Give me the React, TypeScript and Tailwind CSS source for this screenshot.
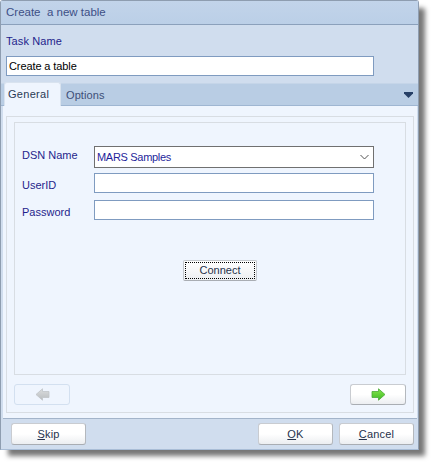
import React from "react";

function Btn({ children, className = "" }: { children?: React.ReactNode; className?: string }) {
  return (
    <div className={"h-[22px] rounded-[3px] border border-[#c9ccd1] border-b-[#a9adb3] border-r-[#b4b8bd] bg-gradient-to-b from-white via-white to-[#eceef1] flex items-center justify-center text-[11px] text-[#26324c] tracking-[0.2px] " + className}>
      {children}
    </div>
  );
}

function Arrow({ id, dir, top, bottom, stroke }: { id: string; dir: "l" | "r"; top: string; bottom: string; stroke: string }) {
  return (
    <svg width="15" height="13" viewBox="0 0 15 13" className={dir === "l" ? "-scale-x-100" : ""}>
      <defs>
        <linearGradient id={id} x1="0" y1="0" x2="0" y2="1">
          <stop offset="0" stopColor={top} />
          <stop offset="1" stopColor={bottom} />
        </linearGradient>
      </defs>
      <path d="M1 3.500h6.500V.8l6.500 5.700-6.500 5.700V9.500H1z" fill={"url(#" + id + ")"} stroke={stroke} strokeWidth="0.8" />
    </svg>
  );
}

function Field({ label, labelClass, children }: { label: string; labelClass: string; children: React.ReactNode }) {
  return (
    <div className="flex items-center">
      <div className={"w-[72px] text-[11px] leading-[14px] text-[#1f1f8c] " + labelClass}>{label}</div>
      {children}
    </div>
  );
}

export default function App() {
  return (
    <div className="w-[435px] h-[466px] bg-white font-['Liberation_Sans',Arial,sans-serif] overflow-hidden">
      <div className="w-[419px] h-[450px] flex flex-col rounded-t-[3px] border border-[#8e9db0] border-b-[#a9bdd6] bg-[#d0ddee] shadow-[7px_7px_5px_-1px_#777777]">
        <div className="h-[24px] shrink-0 bg-gradient-to-b from-[#c2d4ea] to-[#bbcfe7] border-b border-[#8ba0bb] pl-[5px] flex items-center text-[11.500px] text-[#3d4f86] whitespace-pre">
          Create  a new table
        </div>
        <div className="h-[31px] shrink-0 pl-[5px] pt-[9px] text-[11px] leading-[14px] text-[#1f1f8c] tracking-[0.1px]">Task Name</div>
        <div className="ml-[5px] w-[368px] h-[20px] shrink-0 bg-white border border-[#7f9bc0] pl-[2px] flex items-center text-[11px] text-black tracking-[-0.1px]">
          Create a table
        </div>
        <div className="mt-[7px] h-[23px] shrink-0 bg-[#b9cde4] border-t border-[#c5d5e8] border-b border-b-[#9fb6d2] flex items-end relative">
          <div className="ml-[3px] w-[57px] h-[24px] -mb-px bg-[#eff5fe] rounded-t-[3px] border border-b-0 border-[#d9e3ef] pl-[3px] pt-[4px] text-[11px] leading-[15px] text-[#2a3a55] z-10 tracking-[0.3px]">General</div>
          <div className="pl-[5px] pb-[2px] text-[11px] leading-[15px] text-[#3d4f78] tracking-[0.1px]">Options</div>
          <svg width="9" height="6" viewBox="0 0 9 6" className="absolute right-[5px] top-[8px]">
            <path d="M0 0h9v1.500L4.500 6 0 1.500z" fill="#263f66" />
          </svg>
        </div>
        <div className="ml-[2px] w-[414px] h-[313px] shrink-0 bg-[#eff5fe] border-b border-[#a3b4ca] px-[3px] pt-[10px] pb-[5px]">
          <div className="h-full border border-[#d8dde3] pt-[5px] px-[7px]">
            <div className="h-[253px] border border-[#d8dde3] pt-[23px] flex flex-col">
              <div className="pl-[7px] flex flex-col">
                <Field label="DSN Name" labelClass="pb-[4px]">
                  <div className="w-[280px] h-[22px] bg-white border border-[#707070] pl-[2px] pr-[4px] flex items-center justify-between text-[11px] text-[#1f1f9c] tracking-[-0.3px]">
                    MARS Samples
                    <svg width="9" height="6" viewBox="0 0 9 6"><path d="M.5 1l4 4 4-4" fill="none" stroke="#555" strokeWidth="1" /></svg>
                  </div>
                </Field>
                <div className="mt-[5px]">
                  <Field label="UserID" labelClass="pt-[4px]"><div className="w-[280px] h-[20px] bg-white border border-[#7f9bc0]" /></Field>
                </div>
                <div className="mt-[7px]">
                  <Field label="Password" labelClass="pt-[4px]"><div className="w-[280px] h-[20px] bg-white border border-[#7f9bc0]" /></Field>
                </div>
              </div>
              <div className="mt-[40px] ml-[168px] w-[74px] h-[21px] rounded-[2px] border border-[#c4c8cd] border-b-[#a9adb3] bg-gradient-to-b from-white to-[#eceef1] p-px">
                <div className="h-full border border-dotted border-black flex items-center justify-center text-[11px] text-[#26324c]">Connect</div>
              </div>
            </div>
            <div className="mt-[9px] flex justify-between">
              <div className="w-[56px] h-[21px] rounded-[3px] border border-[#d3e0f0] flex items-center justify-center">
                <Arrow id="back" dir="l" top="#dcdedf" bottom="#b8bcbf" stroke="#c0c4c8" />
              </div>
              <Btn className="w-[56px] !h-[21px]"><Arrow id="next" dir="r" top="#86e64c" bottom="#3fbb24" stroke="#4aa838" /></Btn>
            </div>
          </div>
        </div>
        <div className="flex-1 flex items-start pt-[4px] pl-[10px] pr-[4px] justify-between">
          <Btn className="w-[75px]"><span><span className="underline">S</span>kip</span></Btn>
          <div className="flex gap-[6px]">
            <Btn className="w-[75px]"><span><span className="underline">O</span>K</span></Btn>
            <Btn className="w-[75px]"><span><span className="underline">C</span>ancel</span></Btn>
          </div>
        </div>
      </div>
    </div>
  );
}
